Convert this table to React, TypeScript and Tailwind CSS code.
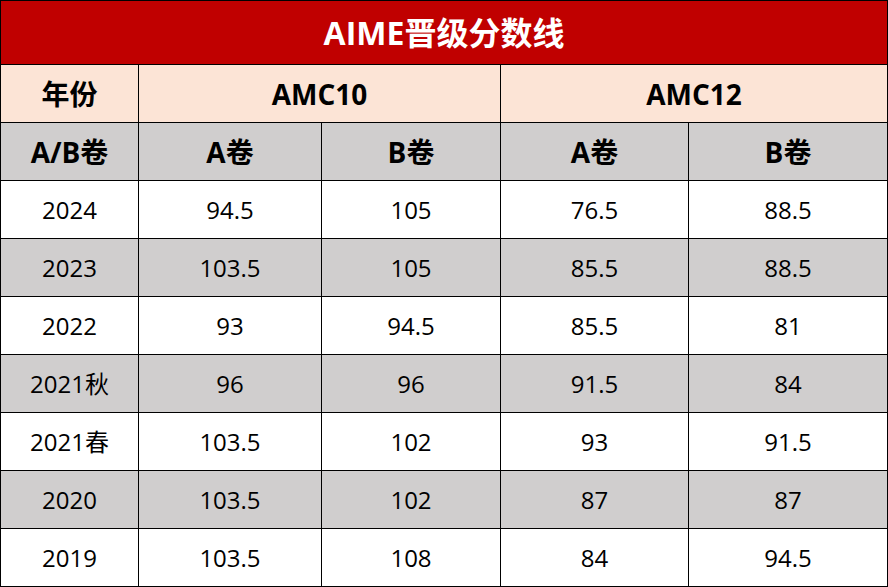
const rows: [string, string, string, string, string][] = [
  ["2024", "94.5", "105", "76.5", "88.5"],
  ["2023", "103.5", "105", "85.5", "88.5"],
  ["2022", "93", "94.5", "85.5", "81"],
  ["2021秋", "96", "96", "91.5", "84"],
  ["2021春", "103.5", "102", "93", "91.5"],
  ["2020", "103.5", "102", "87", "87"],
  ["2019", "103.5", "108", "84", "94.5"],
];

const font = { fontFamily: '"Open Sans", "Noto Sans CJK SC", sans-serif' };

export default function App() {
  return (
    <div className="w-[888px] h-[587px] bg-white" style={font}>
      <table className="w-[888px] border-collapse table-fixed text-black">
        <colgroup>
          <col className="w-[138px]" />
          <col className="w-[183px]" />
          <col className="w-[179px]" />
          <col className="w-[188px]" />
          <col />
        </colgroup>
        <thead>
          <tr className="h-[64px] bg-[#c00000]">
            <th colSpan={5} className="border border-black text-white text-[32px] font-bold">
              AIME晋级分数线
            </th>
          </tr>
          <tr className="h-[58px] bg-[#fce4d6] text-[28px] font-bold">
            <th className="border border-black">年份</th>
            <th colSpan={2} className="border border-black">AMC10</th>
            <th colSpan={2} className="border border-black">AMC12</th>
          </tr>
          <tr className="h-[58px] bg-[#d0cece] text-[28px] font-bold">
            <th className="border border-black">A/B卷</th>
            <th className="border border-black">A卷</th>
            <th className="border border-black">B卷</th>
            <th className="border border-black">A卷</th>
            <th className="border border-black">B卷</th>
          </tr>
        </thead>
        <tbody>
          {rows.map((r, i) => (
            <tr key={r[0]} className={`h-[58px] text-[24px] ${i % 2 === 1 ? "bg-[#d0cece]" : "bg-white"}`}>
              {r.map((c, j) => (
                <td key={j} className="border border-black text-center">
                  {c}
                </td>
              ))}
            </tr>
          ))}
        </tbody>
      </table>
    </div>
  );
}
